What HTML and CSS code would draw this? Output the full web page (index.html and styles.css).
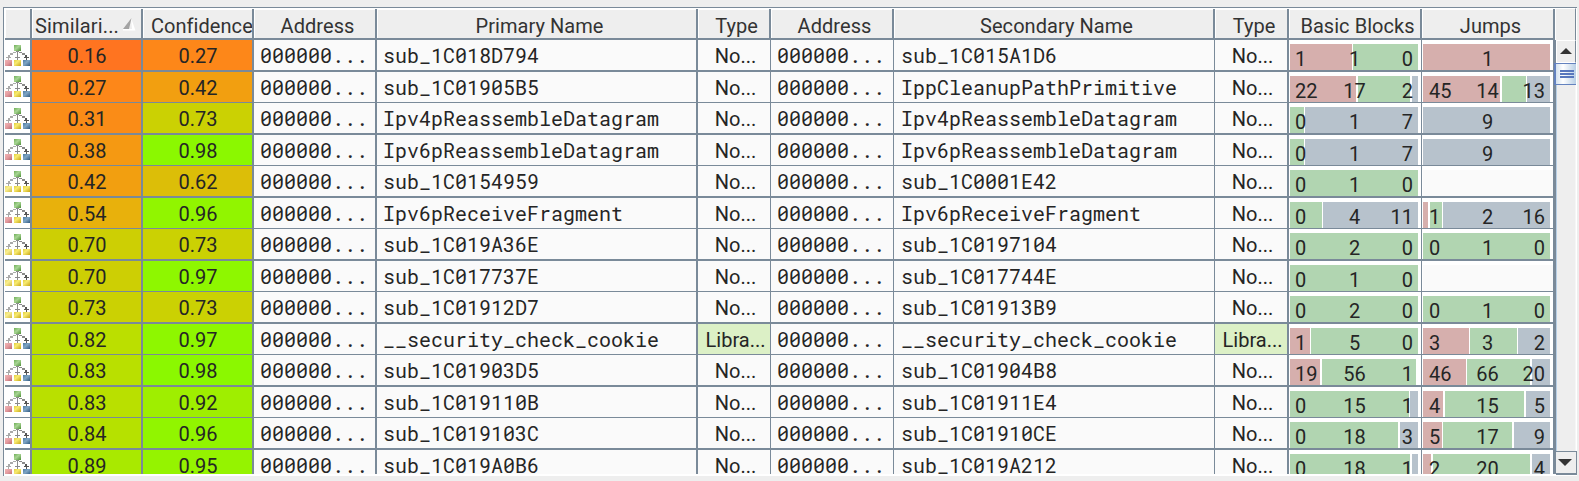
FILE: index.html
```html
<!DOCTYPE html>
<html lang="en">
<head>
<meta charset="utf-8">
<title>Matched Functions</title>
<link rel="stylesheet" href="styles.css">
</head>
<body>
<svg class="defs" width="0" height="0">
  <defs>
    <linearGradient id="g-green" x2="1" y2="1"><stop offset="0" stop-color="#6fae58"/><stop offset=".45" stop-color="#a8d594"/><stop offset="1" stop-color="#4d8f35"/></linearGradient>
    <linearGradient id="g-red" x2="1" y2="1"><stop offset="0" stop-color="#f0b4b4"/><stop offset=".5" stop-color="#e39a9e"/><stop offset="1" stop-color="#b8676c"/></linearGradient>
    <linearGradient id="g-yellow" x2="1" y2="1"><stop offset="0" stop-color="#e3cf3c"/><stop offset=".4" stop-color="#f7ea72"/><stop offset="1" stop-color="#c8a714"/></linearGradient>
    <linearGradient id="g-blue" x2="1" y2="1"><stop offset="0" stop-color="#4d7ba3"/><stop offset=".45" stop-color="#7fa5c4"/><stop offset="1" stop-color="#315b82"/></linearGradient>
    <g id="tree" shape-rendering="crispEdges">
      <rect x="9" y="0" width="7" height="6" fill="url(#g-green)"/>
      <path d="M8 7h3v1h-3zM5 8h3v2h-3zM3 10h2v2h-2zM1 12h5v1h-5zM3 13h1v2h-1z" fill="#aaa"/>
      <path d="M11 6h3v1h-3zM12 7h1v8h-1zM10 12h5v1h-5z" fill="#8a8a8a"/>
      <path d="M14 7h3v1h-3zM17 8h3v2h-3z" fill="#8a8a8a"/>
      <path d="M20 10h2v2h-2zM19 12h5v1h-5zM21 13h1v2h-1z" fill="#555"/>
      <rect x="9" y="15" width="7" height="6" fill="url(#g-yellow)"/>
    </g>
    <g id="changed" shape-rendering="crispEdges"><use href="#tree"/><rect y="15" width="7" height="6" fill="url(#g-red)"/><rect x="18" y="15" width="7" height="6" fill="url(#g-blue)"/></g>
    <g id="same" shape-rendering="crispEdges"><use href="#tree"/><rect y="15" width="7" height="6" fill="url(#g-yellow)" opacity=".8"/><rect x="18" y="15" width="7" height="6" fill="url(#g-yellow)"/></g>
  </defs>
</svg>
<div class="panel">
  <div class="table">
    <div class="row head">
      <div class="h"></div>
      <div class="h sorted"><span>Similari...</span><svg width="13" height="13"><path d="M8 0L12.500 12.500H0V11H9z" fill="#fff"/><path d="M8.500 0L0 11H6z" fill="#a3a3a3"/></svg></div>
      <div class="h conf">Confidence</div>
      <div class="h">Address</div>
      <div class="h">Primary Name</div>
      <div class="h">Type</div>
      <div class="h">Address</div>
      <div class="h">Secondary Name</div>
      <div class="h">Type</div>
      <div class="h">Basic Blocks</div>
      <div class="h">Jumps</div>
    </div>
    <div class="body" id="body"></div>
  </div>
  <div class="side">
    <div class="corner"></div>
    <div class="btn up"><svg width="12" height="6"><path d="M6 0L12 6H0z" fill="#333"/></svg></div>
    <div class="thumb"><i></i><i></i><i></i></div>
    <div class="track"></div>
    <div class="btn down"><svg width="14" height="7"><path d="M0 0H14L7 7z" fill="#333"/></svg></div>
  </div>
</div>
<script src="table.js"></script>
</body>
</html>
```
FILE: styles.css
```css
* { box-sizing: border-box; }
body {
  margin: 0;
  height: 481px;
  overflow: hidden;
  background: #eee;
  padding: 7px 2px 0 3px;
  font-family: Roboto, "Liberation Sans", sans-serif;
  font-size: 20px;
  color: #252525;
}
.defs { display: block; width: 0; height: 0; }
.panel {
  display: flex;
  width: 1574px;
  height: 469px;
  border-top: 1px solid #7a8a99;
  border-left: 1px solid #7a8a99;
  background: #fff;
  padding: 0 0 2px 1px;
}
.table { width: 1551px; height: 466px; overflow: hidden; }
.row {
  display: grid;
  grid-template-columns: 27px 111px 111px 123px 321px 73px 123px 321px 74px 133px 134px;
}
.head { height: 32px; padding-top: 1px; }
.h {
  background: #eee;
  border: 0 solid #7a8a99;
  border-width: 0 2px 2px 0;
  box-shadow: inset 1px 1px #fff;
  color: #333;
  height: 31px;
  text-align: center;
  padding-left: 6px;
  letter-spacing: .05px;
  line-height: 34px;
  white-space: nowrap;
  overflow: hidden;
}
.h:last-child { margin-right: 1px; }
.sorted { display: flex; align-items: flex-start; padding-left: 3px; letter-spacing: .15px; }
.sorted svg { margin: 9px 0 0 4px; }
.conf { padding-left: 8px; text-align: left; }
.body { height: 434px; overflow: hidden; }
.line { height: 32px; }
.line:nth-child(even) { height: 31px; }
.c {
  background: #fafafa;
  border: 0 solid #7a8a99;
  border-width: 0 2px 2px 0;
  line-height: 32px;
  white-space: pre;
  overflow: hidden;
}
.line:nth-child(even) .c { border-bottom-width: 1px; }
.thin { border-right-width: 1px; }
.icon { background: #fff; padding-top: 5px; }
.line:nth-child(even) .icon { padding-top: 4px; }
.icon svg { display: block; }
.center { text-align: center; padding-left: 1px; }
.type { padding-left: 3px; }
.mono { font-family: "Roboto Mono", "DejaVu Sans Mono", monospace; line-height: 30px; padding-left: 6px; }
.second { padding-left: 7px; }
.library { background: #dcf0c6; }
.metric { background: #fff; padding: 4px 3px 0 1px; }
.metric:last-child { border-right-width: 3px; }
.bar { display: grid; height: 100%; }
.segments, .counts { grid-area: 1 / 1; min-width: 0; }
.segments { display: flex; }
.segments i { flex: none; }
.r { background: #d6afad; }
.g { background: #b1d5b1; }
.b { background: #b7c2cc; }
.none { flex: 1 !important; background: #fafafa; margin-right: -3px; }
.counts { display: grid; grid-template-columns: 43px 1fr 42px; line-height: 31px; height: 26px; padding: 0 5px; }
.metric:last-child .counts { padding-left: 6px; }
.counts span:nth-child(2) { text-align: center; }
.counts span:nth-child(3) { text-align: right; }
.side { display: flex; flex-direction: column; width: 21px; }
.corner { height: 32px; width: 20px; background: #eee; border-right: 1px solid #7a8a99; border-top: 1px solid #fff; }
.btn { display: flex; align-items: center; justify-content: center; background: #eee; flex: none; }
.up { height: 23px; width: 20px; border: 1px solid #fff; border-right-color: #7a8a99; padding: 0 0 2px 0; }
.down { height: 24px; border: 1px solid #7a8a99; border-width: 1px 1px 2px 0; margin-bottom: -1px; padding-right: 2px; }
.thumb {
  display: flex; flex-direction: column; gap: 1px; justify-content: center; align-items: flex-end;
  height: 22px; width: 22px; margin-left: -2px; padding: 0 2px 1px 0; flex: none;
  border: 1px solid #6382bf;
  border-left-width: 2px;
  border-right: 0;
  background: linear-gradient(90deg, #d4e2ef, #fff 35%, #b8cfe5);
}
.thumb i { width: 14px; height: 2px; background: #5877bd; }
.track { flex: 1; width: 20px; background: #eee; border-left: 1px solid #b8cfe5; border-right: 1px solid #f6f6f6; }
```
FILE: table.js
```js
// icon, similarity, confidence, primary, secondary, block counts, block segments, jump counts, jump segments
// Each segment is [colour, width, gap after it].
const G = [['g', 128]], GJ = [['g', 127]];
const rows = [
  ['changed', '0.16', '0.27', 'sub_1C018D794', 'sub_1C015A1D6', [1, 1, 0], [['r', 62, 1], ['g', 65]], ['', 1, ''], [['r', 127]]],
  ['changed', '0.27', '0.42', 'sub_1C01905B5', 'IppCleanupPathPrimitive', [22, 17, 2], [['r', 66, 2], ['g', 52, 2], ['b', 6]], [45, 14, 13], [['r', 77, 2], ['g', 24, 1], ['b', 23]]],
  ['changed', '0.31', '0.73', 'Ipv4pReassembleDatagram', 'Ipv4pReassembleDatagram', [0, 1, 7], [['g', 14, 1], ['b', 113]], ['', 9, ''], [['b', 127]]],
  ['changed', '0.38', '0.98', 'Ipv6pReassembleDatagram', 'Ipv6pReassembleDatagram', [0, 1, 7], [['g', 14, 1], ['b', 113]], ['', 9, ''], [['b', 127]]],
  ['same', '0.42', '0.62', 'sub_1C0154959', 'sub_1C0001E42', [0, 1, 0], G, ['', '', ''], []],
  ['changed', '0.54', '0.96', 'Ipv6pReceiveFragment', 'Ipv6pReceiveFragment', [0, 4, 11], [['g', 32, 1], ['b', 95]], [1, 2, 16], [['r', 5, 2], ['g', 12, 1], ['b', 107]]],
  ['same', '0.70', '0.73', 'sub_1C019A36E', 'sub_1C0197104', [0, 2, 0], G, [0, 1, 0], GJ],
  ['same', '0.70', '0.97', 'sub_1C017737E', 'sub_1C017744E', [0, 1, 0], G, ['', '', ''], []],
  ['same', '0.73', '0.73', 'sub_1C01912D7', 'sub_1C01913B9', [0, 2, 0], G, [0, 1, 0], GJ],
  ['changed', '0.82', '0.97', '__security_check_cookie', '__security_check_cookie', [1, 5, 0], [['r', 20, 1], ['g', 107]], [3, 3, 2], [['r', 46, 1], ['g', 47, 1], ['b', 32]]],
  ['changed', '0.83', '0.98', 'sub_1C01903D5', 'sub_1C01904B8', [19, 56, 1], [['r', 30, 2], ['g', 94]], [46, 66, 20], [['r', 43, 1], ['g', 63, 2], ['b', 18]]],
  ['changed', '0.83', '0.92', 'sub_1C019110B', 'sub_1C01911E4', [0, 15, 1], [['g', 119, 1], ['b', 8]], [4, 15, 5], [['r', 20, 2], ['g', 79, 2], ['b', 24]]],
  ['changed', '0.84', '0.96', 'sub_1C019103C', 'sub_1C01910CE', [0, 18, 3], [['g', 108, 2], ['b', 18]], [5, 17, 9], [['r', 19, 1], ['g', 69, 2], ['b', 36]]],
  ['changed', '0.89', '0.95', 'sub_1C019A0B6', 'sub_1C019A212', [0, 18, 1], [['g', 120, 2], ['b', 6]], [2, 20, 4], [['r', 8, 2], ['g', 97, 2], ['b', 18]]]
];
const heat = {
  '0.16': '#ff7420', '0.27': '#fd8719', '0.31': '#fa8c17', '0.38': '#f59912', '0.42': '#f29f10',
  '0.54': '#e8b10c', '0.62': '#dcbe08', '0.70': '#cdcf04', '0.73': '#cbd103', '0.82': '#bbdf00',
  '0.83': '#b9e000', '0.84': '#b6e100', '0.89': '#a9e900', '0.92': '#9fee00', '0.95': '#95f300',
  '0.96': '#91f500', '0.97': '#8ef700', '0.98': '#8bf800'
};
const metric = (counts, segs, cls) => `<div class="c metric ${cls}"><div class="bar"><div class="segments">${
  segs.length ? segs.map(([k, w, gap = 0]) => `<i class="${k}" style="width:${w}px;margin-right:${gap}px"></i>`).join('') : '<i class="none"></i>'
}</div><div class="counts">${counts.map(n => `<span>${n}</span>`).join('')}</div></div></div>`;
document.getElementById('body').innerHTML = rows.map(([icon, s, c, p, q, bn, bs, jn, js]) => {
  const lib = p.startsWith('__');
  const type = lib ? 'Libra...' : 'No...', tc = lib ? ' library' : '';
  return `<div class="row line">
    <div class="c icon"><svg width="25" height="21"><use href="#${icon}"/></svg></div>
    <div class="c center" style="background:${heat[s]}">${s}</div>
    <div class="c center" style="background:${heat[c]}">${c}</div>
    <div class="c mono">000000...</div>
    <div class="c mono">${p}</div>
    <div class="c center type thin${tc}">${type}</div>
    <div class="c mono thin">000000...</div>
    <div class="c mono second thin">${q}</div>
    <div class="c center type${tc}">${type}</div>
    ${metric(bn, bs, 'thin')}${metric(jn, js, '')}
  </div>`;
}).join('');
```
